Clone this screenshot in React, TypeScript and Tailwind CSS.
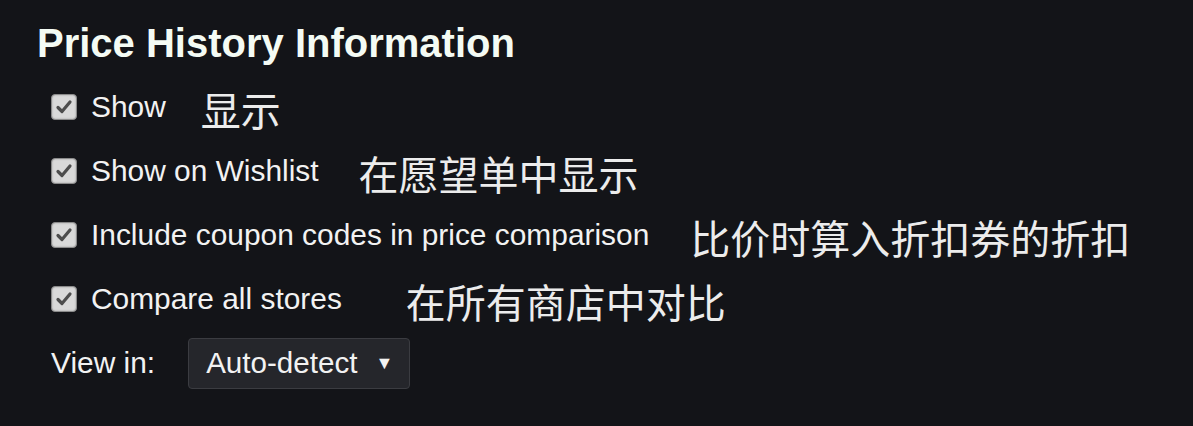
import React from 'react';

const ROWS = [
  { label: 'Show', note: '显示', gap: 'ml-[35px]' },
  { label: 'Show on Wishlist', note: '在愿望单中显示', gap: 'ml-[40px]' },
  { label: 'Include coupon codes in price comparison', note: '比价时算入折扣券的折扣', gap: 'ml-[41px]' },
  { label: 'Compare all stores', note: '在所有商店中对比', gap: 'ml-[64px]' },
];

function CheckBox() {
  return (
    <span className="w-[26px] h-[26px] shrink-0 rounded-[4px] bg-[#d9d9d9] border border-[#8a8a8a] flex items-center justify-center shadow-[inset_0_0_2px_rgba(0,0,0,0.3)]">
      <svg width="18" height="18" viewBox="0 0 18 18">
        <path d="M3 9.5 L7 13.5 L15 4" fill="none" stroke="#4d4d4d" strokeWidth="3.2" strokeLinecap="round" strokeLinejoin="round" />
      </svg>
    </span>
  );
}

export default function App() {
  return (
    <div className="w-[1193px] h-[426px] bg-[#131418] text-[#f2f2f2] pl-[37px] pt-[20px] font-['Liberation_Sans',Arial,sans-serif]">
      {/* Title */}
      <h1 className="text-[40px] font-bold leading-[46px] text-[#f4fbf4]">Price History Information</h1>

      {/* Options */}
      <div className="pl-[14px] mt-[9px] flex flex-col">
        {ROWS.map((row) => (
          <div key={row.label} className="h-[64px] flex items-center">
            <CheckBox />
            <span className="ml-[14px] text-[29.9px] leading-none">{row.label}</span>
            <span className={`${row.gap} text-[40px] leading-none text-[#ececec] font-['Noto_Sans_CJK_SC',sans-serif] translate-y-[2px]`}>
              {row.note}
            </span>
          </div>
        ))}

        <div className="h-[64px] flex items-center">
          <span className="text-[29.9px] leading-none">View in:</span>
          <div className="ml-[33px] h-[51px] flex items-center pl-[17px] pr-[16px] bg-[#25262b] border border-[#3b3c41] rounded-[4px]">
            <span className="text-[29.6px] leading-none">Auto-detect</span>
            <span className="ml-[18px] text-[18px] leading-none">▼</span>
          </div>
        </div>
      </div>
    </div>
  );
}
